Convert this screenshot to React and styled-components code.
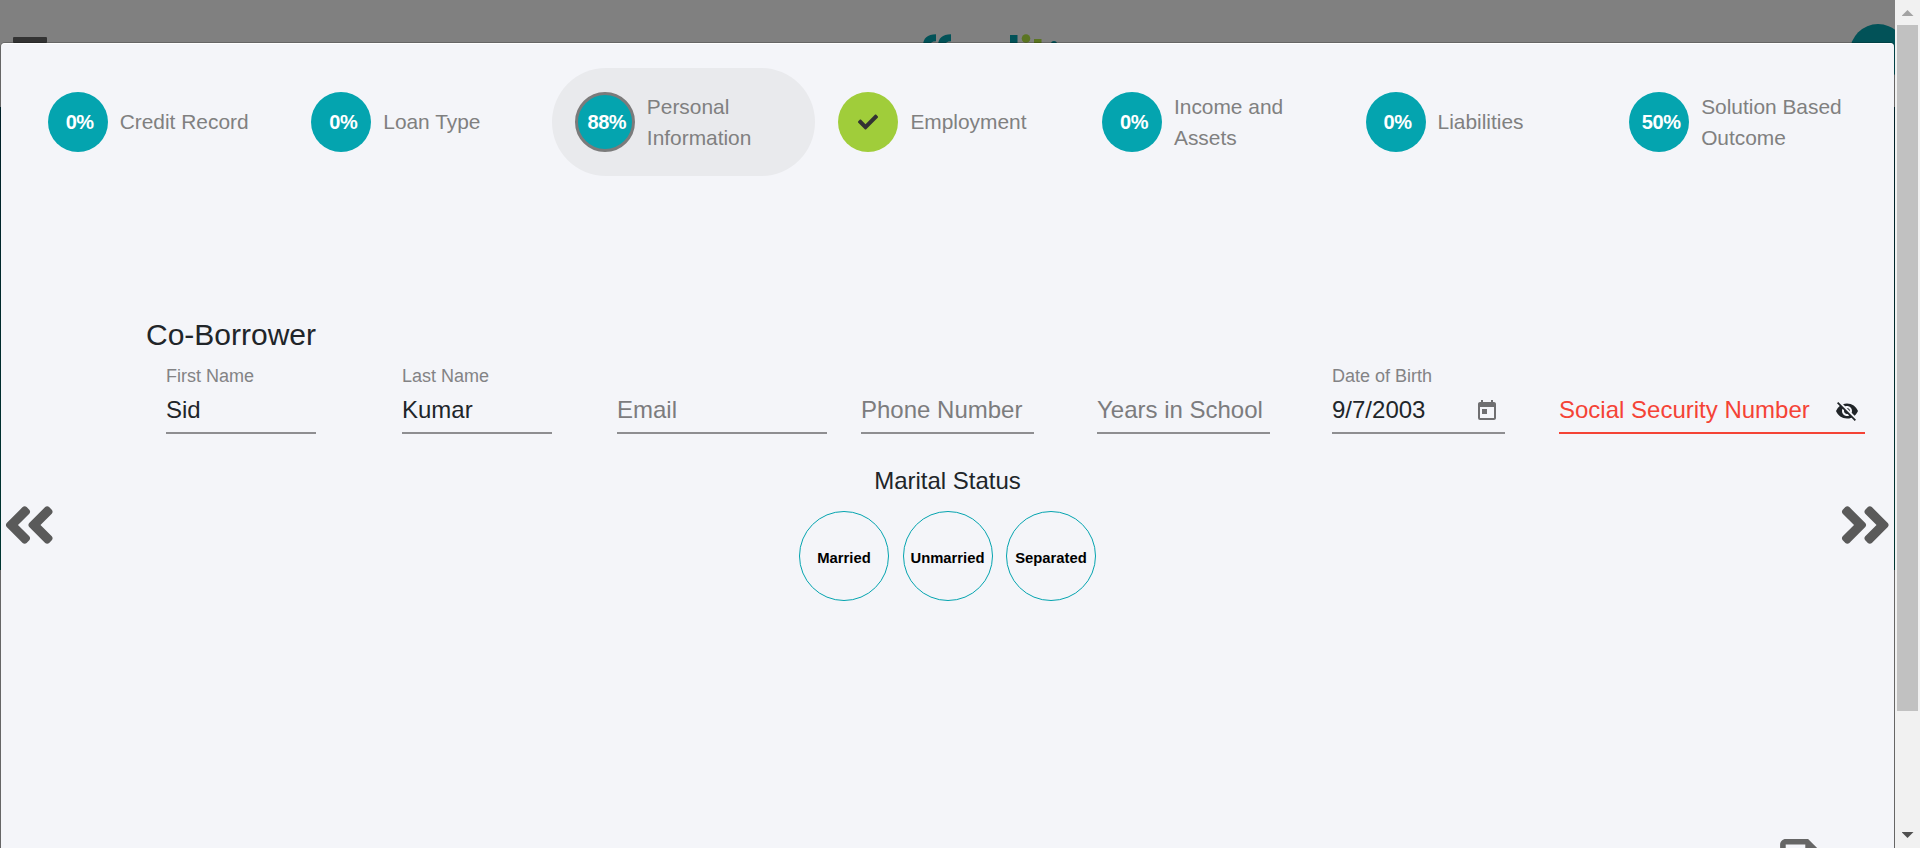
import React from "react";
import styled, { createGlobalStyle } from "styled-components";
import { FaAngleDoubleLeft, FaAngleDoubleRight, FaCheck } from "react-icons/fa";
import { MdToday, MdVisibilityOff } from "react-icons/md";

const GlobalStyle = createGlobalStyle`
  *, *::before, *::after { box-sizing: border-box; }
  body {
    margin: 0;
    overflow: hidden;
    font-family: "Liberation Sans", Arial, sans-serif;
    color: #212529;
  }
`;

const Viewport = styled.div`
  display: grid;
  grid-template-columns: 1fr 25px;
  height: 100vh;
  min-height: 848px;
  max-height: 848px;
  overflow: hidden;
`;

const Screen = styled.div`
  position: relative;
  overflow: hidden;
  padding-top: 42px;
`;

/* Dimmed page behind the dialog */
const Page = styled.div`
  position: absolute;
  inset: 0;
  display: flex;
  flex-direction: column;
  background: #808080;
`;

const Header = styled.header`
  display: flex;
  justify-content: space-between;
  height: 107px;
  padding-left: 13px;
  overflow: hidden;
`;

const MenuBar = styled.span`
  width: 34px;
  height: 6px;
  margin-top: 37px;
  border-radius: 1px;
  background: #333;
`;

const Brand = styled.svg`
  width: 140px;
  height: 20px;
  margin: 33px 0 0 83px;
`;

const Avatar = styled.span`
  width: 56px;
  height: 56px;
  margin: 24px -11px 0 0;
  border-radius: 50%;
  background: #025258;
`;

const Hero = styled.div`
  height: 463px;
  background: linear-gradient(#002833, #00443f);
`;

const Dialog = styled.main`
  position: relative;
  display: flex;
  flex-direction: column;
  height: 830px;
  padding: 25px 24px 0;
  border: 1px solid rgba(0, 0, 0, 0.2);
  border-radius: 5px;
  background: #f4f5f9;
  background-clip: padding-box;
  box-shadow: inset 0 1px 0 #fff;
`;

const Steps = styled.nav`
  display: grid;
  grid-template-columns: repeat(7, 1fr);
  margin: 0 0.3px 0 -0.3px;
`;

const Step = styled.div`
  display: flex;
  align-items: center;
  gap: 12px;
  height: 108px;
  padding: 0 23px;
  border-radius: 54px;
  background: ${(p) => (p.$active ? "#e9eaed" : "transparent")};
`;

const StepBadge = styled.span`
  display: flex;
  flex: none;
  align-items: center;
  justify-content: center;
  width: 60px;
  height: 60px;
  padding-left: ${(p) => (p.$done ? "0" : "4px")};
  border: ${(p) => (p.$active ? "3px solid #7b7b7b" : "0")};
  border-radius: 50%;
  background: ${(p) => (p.$done ? "#a0cd3a" : "#04a4af")};
  color: ${(p) => (p.$done ? "#333" : "#fff")};
  font-size: 20px;
  font-weight: 700;
  letter-spacing: -0.4px;
  line-height: 30px;
`;

const StepName = styled.span`
  color: #808080;
  font-size: 20.9px;
  line-height: 31.2px;
`;

const Title = styled.h2`
  margin: 141px 0 0 121px;
  font-size: 30px;
  font-weight: 400;
  line-height: 36px;
`;

const Fields = styled.div`
  display: flex;
  margin: 13px 0 0 141px;
`;

const Field = styled.div`
  flex: none;
  width: ${(p) => p.$width}px;
  margin-left: ${(p) => p.$before}px;
  border-bottom: 2px solid ${(p) => (p.$error ? "#f44336" : "#8e8e91")};
`;

const FieldLabel = styled.div`
  height: 20px;
  color: #838385;
  font-size: 18px;
  line-height: 20px;
`;

const FieldValue = styled.div`
  display: flex;
  align-items: center;
  justify-content: space-between;
  height: 28px;
  margin: 10px 0 8px;
  color: ${(p) => (p.$error ? "#f44336" : p.$empty ? "#7c7c7e" : "#212529")};
  font-size: 24px;
  line-height: 28px;
  white-space: nowrap;
`;

const FieldIcon = styled.span`
  display: flex;
  margin-right: ${(p) => p.$inset}px;
  padding-top: 1px;
  color: ${(p) => p.$color};
  font-size: 24px;
`;

const Subtitle = styled.h3`
  margin: 33px 0 0;
  font-size: 24px;
  font-weight: 400;
  line-height: 28px;
  text-align: center;
`;

const Options = styled.div`
  display: flex;
  justify-content: center;
  gap: 13.5px;
  margin-top: 16px;
`;

const Option = styled.button`
  display: flex;
  align-items: center;
  justify-content: center;
  width: 90px;
  height: 90px;
  padding: 4px 0 0;
  border: 1px solid #04a4af;
  border-radius: 50%;
  background: transparent;
  color: #000;
  font: 700 14.8px/18px "Liberation Sans", Arial, sans-serif;
`;

const Arrow = styled.button`
  position: absolute;
  top: 452px;
  ${(p) => p.$side}: ${(p) => (p.$side === "left" ? 2 : 3)}px;
  display: flex;
  padding: 0;
  border: 0;
  background: none;
  color: #5a5a5a;

  svg {
    width: 52.5px;
    height: 60px;
  }
`;

const FileIcon = styled.svg`
  align-self: flex-end;
  flex: none;
  width: 45px;
  height: 56px;
  margin: 238px 45px 0 0;
  fill: #666;
`;

const Scrollbar = styled.div`
  display: flex;
  flex-direction: column;
  align-items: center;
  justify-content: space-between;
  padding: 10px 0;
  background: #f1f1f1;
`;

const ScrollArrow = styled.span`
  width: 12px;
  height: 6px;
  background: ${(p) => (p.$down ? "#505050" : "#a3a3a3")};
  clip-path: ${(p) =>
    p.$down ? "polygon(0 0, 100% 0, 50% 100%)" : "polygon(50% 0, 100% 100%, 0 100%)"};
`;

const ScrollThumb = styled.span`
  width: 21px;
  height: 686px;
  margin: 9px 0 auto;
  background: #c1c1c1;
`;

const steps = [
  { name: "Credit Record", progress: "0%" },
  { name: "Loan Type", progress: "0%" },
  { name: "Personal Information", progress: "88%", active: true },
  { name: "Employment", done: true },
  { name: "Income and Assets", progress: "0%" },
  { name: "Liabilities", progress: "0%" },
  { name: "Solution Based Outcome", progress: "50%" },
];

const fields = [
  { label: "First Name", value: "Sid", width: 150, before: 0 },
  { label: "Last Name", value: "Kumar", width: 150, before: 86 },
  { label: "Email", width: 210, before: 65 },
  { label: "Phone Number", width: 173, before: 34 },
  { label: "Years in School", width: 173, before: 63 },
  {
    label: "Date of Birth",
    value: "9/7/2003",
    width: 173,
    before: 62,
    icon: <MdToday />,
    iconColor: "#6f6f71",
    inset: 6,
  },
  {
    label: "Social Security Number",
    width: 306,
    before: 54,
    error: true,
    icon: <MdVisibilityOff />,
    iconColor: "#212529",
    inset: 6,
  },
];

export default function App() {
  return (
    <>
      <GlobalStyle />
      <Viewport>
        <Screen>
          <Page>
            <Header>
              <MenuBar />
              <Brand viewBox="0 0 140 20">
                <g fill="none" stroke="#025258" strokeWidth="7">
                  <path d="M6.5 20V13Q6.5 4.8 16 4.8" />
                  <path d="M21.500 20V13Q21.500 4.800 31 4.800" />
                </g>
                <path fill="#025258" d="M90 2h7.500v18H90z" />
                <circle cx="106" cy="5.500" r="4.300" fill="#5b7522" />
                <path fill="#5b7522" d="M114 6h7.500v14H114z" />
                <circle cx="134" cy="11" r="3" fill="#025258" />
              </Brand>
              <Avatar />
            </Header>
            <Hero />
          </Page>
          <Dialog>
            <Steps>
              {steps.map((s) => (
                <Step key={s.name} $active={s.active}>
                  <StepBadge $active={s.active} $done={s.done}>
                    {s.done ? <FaCheck size={20} /> : s.progress}
                  </StepBadge>
                  <StepName>{s.name}</StepName>
                </Step>
              ))}
            </Steps>
            <Title>Co-Borrower</Title>
            <Fields>
              {fields.map((f) => (
                <Field key={f.label} $width={f.width} $before={f.before} $error={f.error}>
                  <FieldLabel>{f.value ? f.label : null}</FieldLabel>
                  <FieldValue $empty={!f.value} $error={f.error}>
                    {f.value || f.label}
                    {f.icon && (
                      <FieldIcon $color={f.iconColor} $inset={f.inset}>
                        {f.icon}
                      </FieldIcon>
                    )}
                  </FieldValue>
                </Field>
              ))}
            </Fields>
            <Subtitle>Marital Status</Subtitle>
            <Options>
              <Option>Married</Option>
              <Option>Unmarried</Option>
              <Option>Separated</Option>
            </Options>
            <FileIcon viewBox="4 2 16 20">
              <path d="M14 2H6c-1.100 0-2 .9-2 2v16c0 1.100.9 2 2 2h12c1.100 0 2-.9 2-2V8l-6-6zM6 20V4h7v5h5v11H6z" />
            </FileIcon>
            <Arrow $side="left" aria-label="Previous">
              <FaAngleDoubleLeft />
            </Arrow>
            <Arrow $side="right" aria-label="Next">
              <FaAngleDoubleRight />
            </Arrow>
          </Dialog>
        </Screen>
        <Scrollbar>
          <ScrollArrow />
          <ScrollThumb />
          <ScrollArrow $down />
        </Scrollbar>
      </Viewport>
    </>
  );
}
